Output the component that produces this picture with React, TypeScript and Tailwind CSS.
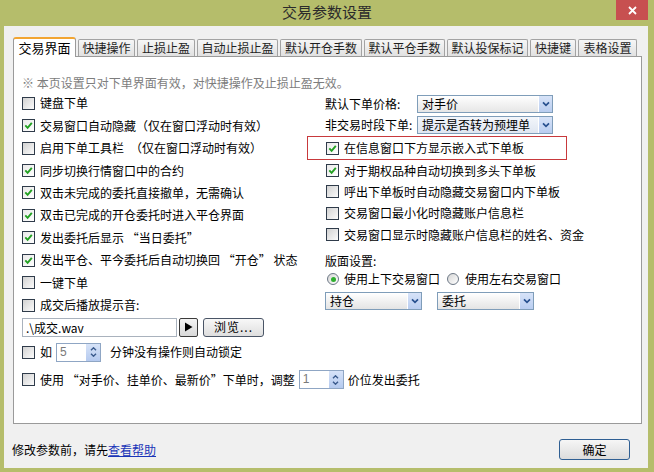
import React from "react";

function Box({ checked }: { checked?: boolean }) {
  return (
    <span
      className={
        checked
          ? "w-[13px] h-[13px] shrink-0 border border-[#2f3b4a] bg-linear-to-br from-[#e9e9e9] to-white flex items-center justify-center"
          : "w-[13px] h-[13px] shrink-0 border border-[#2f3b4a] bg-linear-to-br from-[#d2d2d2] to-[#fbfbfb]"
      }
    >
      {checked && (
        <svg width="9" height="9" viewBox="0 0 9 9">
          <path d="M1.3 4.4 L3.6 6.8 L7.8 1.8" stroke="#21a021" strokeWidth="1.9" fill="none" />
        </svg>
      )}
    </span>
  );
}

function Radio({ checked }: { checked?: boolean }) {
  return (
    <span className="w-[12px] h-[12px] shrink-0 rounded-full border border-[#6d7886] bg-linear-to-br from-[#d6d6d6] to-white flex items-center justify-center">
      {checked && <span className="w-[5px] h-[5px] rounded-full bg-[#2eae2e]" />}
    </span>
  );
}

function Chevron() {
  return (
    <svg width="8" height="6" viewBox="0 0 8 6">
      <path d="M1 1.3 L4 4.3 L7 1.3" stroke="#27508f" strokeWidth="1.7" fill="none" />
    </svg>
  );
}

function Select({ text, cls, bg }: { text: string; cls: string; bg: string }) {
  return (
    <div className={cls}>
      <div className={bg}>{text}</div>
      <div className="w-[14px] shrink-0 border-l border-white bg-linear-to-b from-[#d7e3f8] to-[#b9cdf0] flex items-center justify-center">
        <Chevron />
      </div>
    </div>
  );
}

function Spin({ value }: { value: string }) {
  return (
    <div className="w-[45px] h-[19px] shrink-0 border border-[#8fa6c4] bg-white flex">
      <div className="flex-1 pl-[3px] text-[#7a7a7a] text-[12px] leading-[17px] font-['Liberation_Sans',sans-serif]">{value}</div>
      <div className="w-[14px] bg-linear-to-b from-[#d7e3f8] to-[#b5caef] flex flex-col items-center justify-center gap-[2px]">
        <svg width="7" height="4" viewBox="0 0 7 4">
          <path d="M1 3.3 L3.5 0.8 L6 3.3" stroke="#3a5a8c" strokeWidth="1.4" fill="none" />
        </svg>
        <svg width="7" height="4" viewBox="0 0 7 4">
          <path d="M1 0.7 L3.5 3.2 L6 0.7" stroke="#3a5a8c" strokeWidth="1.4" fill="none" />
        </svg>
      </div>
    </div>
  );
}

function LRow({ checked, children }: { checked?: boolean; children: React.ReactNode }) {
  return (
    <div className="h-[22.45px] flex items-center gap-[5px]">
      <Box checked={checked} />
      <span className="whitespace-nowrap">{children}</span>
    </div>
  );
}

function RRow({ checked, children }: { checked?: boolean; children: React.ReactNode }) {
  return (
    <div className="h-[21.3px] flex items-center gap-[5px] pl-[1px]">
      <Box checked={checked} />
      <span className="whitespace-nowrap">{children}</span>
    </div>
  );
}

const tabs: { label: string; w: string }[] = [
  { label: "快捷操作", w: "w-[57px]" },
  { label: "止损止盈", w: "w-[58px]" },
  { label: "自动止损止盈", w: "w-[81px]" },
  { label: "默认开仓手数", w: "w-[82px]" },
  { label: "默认平仓手数", w: "w-[81px]" },
  { label: "默认投保标记", w: "w-[81px]" },
  { label: "快捷键", w: "w-[46px]" },
  { label: "表格设置", w: "w-[59px]" },
];

export default function App() {
  return (
    <div className="w-[654px] h-[472px] bg-[#b5bd6b] flex flex-col font-['Noto_Sans_CJK_SC','Noto_Sans',sans-serif] text-[12px] leading-[16px] text-black overflow-hidden">
      {/* title bar */}
      <div className="h-[26px] shrink-0 grid grid-cols-[1fr_auto_1fr] items-start">
        <div />
        <div className="text-[15px] leading-[20px] pt-[2px] text-[#2b2b2b]">交易参数设置</div>
        <div className="flex justify-end pr-[6px]">
          <div className="w-[32px] h-[20px] bg-[#c75050] flex items-center justify-center">
            <svg width="9" height="9" viewBox="0 0 9 9">
              <path d="M1 1 L8 8 M8 1 L1 8" stroke="white" strokeWidth="1.8" />
            </svg>
          </div>
        </div>
      </div>

      {/* client */}
      <div className="flex-1 ml-[4px] mr-[6px] mb-[4px] bg-[#f0f0f0] flex flex-col pt-[11px]">
        {/* tabs */}
        <div className="h-[19px] ml-[9px] flex items-end gap-[2px] relative z-[1]">
          <div className="w-[63px] h-[20px] -mb-px -mr-[2px] border-x border-[#9a9a9a] border-t-2 border-t-[#f2a531] rounded-t-[3px] bg-white flex items-center justify-center text-[13px]">
            交易界面
          </div>
          <div className="w-0" />
          {tabs.map((t) => (
            <div
              key={t.label}
              className={`${t.w} h-[17px] border border-b-0 border-[#a3a3a3] rounded-t-[2px] bg-linear-to-b from-[#f6f6f6] to-[#e1e1e1] flex items-center justify-center text-[#1e1e1e] whitespace-nowrap`}
            >
              {t.label}
            </div>
          ))}
        </div>

        {/* panel */}
        <div className="h-[368px] ml-[9px] mr-[6px] border border-[#9a9a9a] bg-white pl-[8px] pt-[17px] flex flex-col">
          <div className="h-[18px] text-[#7d7d7d] flex items-center">※ 本页设置只对下单界面有效，对快捷操作及止损止盈无效。</div>

          <div className="flex">
            {/* left column */}
            <div className="w-[303px] flex flex-col">
              <LRow>键盘下单</LRow>
              <LRow checked>交易窗口自动隐藏（仅在窗口浮动时有效）</LRow>
              <LRow>启用下单工具栏　（仅在窗口浮动时有效）</LRow>
              <LRow checked>同步切换行情窗口中的合约</LRow>
              <LRow checked>双击未完成的委托直接撤单，无需确认</LRow>
              <LRow checked>双击已完成的开仓委托时进入平仓界面</LRow>
              <LRow checked>发出委托后显示 “当日委托”</LRow>
              <LRow checked>发出平仓、平今委托后自动切换回 “开仓” 状态</LRow>
              <LRow>一键下单</LRow>
              <LRow>成交后播放提示音:</LRow>
              <div className="mt-[1.5px] h-[19px] flex items-center">
                <div className="w-[155px] h-[19px] border border-[#a9b2bd] bg-white pl-[3px] leading-[17px] whitespace-nowrap">.\成交.wav</div>
                <div className="ml-[2px] w-[19px] h-[19px] rounded-[2px] border border-[#3b3b3b] bg-linear-to-b from-[#f4f4f4] to-[#d9d9d9] flex items-center justify-center">
                  <svg width="9" height="10" viewBox="0 0 9 10">
                    <path d="M1 0.5 L8.5 5 L1 9.5 Z" fill="#000" />
                  </svg>
                </div>
                <div className="ml-[5px] w-[61px] h-[19px] rounded-[3px] border border-[#4a5566] bg-linear-to-b from-[#f8f8f8] to-[#dedede] flex items-center justify-center tracking-[1px]">
                  浏览...
                </div>
              </div>
            </div>

            {/* right column */}
            <div className="flex-1 flex flex-col pt-[1px]">
              <div className="h-[21px] flex items-center">
                <span className="w-[92px] whitespace-nowrap">默认下单价格:</span>
                <Select
                  text="对手价"
                  cls="w-[136px] h-[18px] border border-[#7f9db9] flex"
                  bg="flex-1 pl-[4px] leading-[16px] bg-linear-to-b from-white to-[#e6e6e6]"
                />
              </div>
              <div className="h-[21px] flex items-center">
                <span className="w-[92px] whitespace-nowrap">非交易时段下单:</span>
                <Select
                  text="提示是否转为预埋单"
                  cls="w-[136px] h-[18px] border border-[#7f9db9] flex"
                  bg="flex-1 pl-[4px] leading-[16px] bg-linear-to-b from-[#f3f6fb] to-[#dfe6f1] whitespace-nowrap"
                />
              </div>
              <div className="mt-[1px] -ml-[18px] w-[260px] h-[24px] border border-[#c8393c] flex items-center gap-[5px] pl-[18px]">
                <Box checked />
                <span className="whitespace-nowrap">在信息窗口下方显示嵌入式下单板</span>
              </div>
              <RRow checked>对于期权品种自动切换到多头下单板</RRow>
              <RRow>呼出下单板时自动隐藏交易窗口内下单板</RRow>
              <RRow>交易窗口最小化时隐藏账户信息栏</RRow>
              <RRow>交易窗口显示时隐藏账户信息栏的姓名、资金</RRow>
              <div className="mt-[7px] h-[18px] flex items-center">版面设置:</div>
              <div className="h-[18px] flex items-center pl-[2px]">
                <Radio checked />
                <span className="ml-[5px] whitespace-nowrap">使用上下交易窗口</span>
                <span className="ml-[7px]">
                  <Radio />
                </span>
                <span className="ml-[6px] whitespace-nowrap">使用左右交易窗口</span>
              </div>
              <div className="mt-[4px] h-[18px] flex items-center gap-[15px]">
                <Select
                  text="持仓"
                  cls="w-[97px] h-[18px] border border-[#7f9db9] flex"
                  bg="flex-1 pl-[4px] leading-[16px] bg-linear-to-b from-white to-[#e4e4e4]"
                />
                <Select
                  text="委托"
                  cls="w-[97px] h-[18px] border border-[#7f9db9] flex"
                  bg="flex-1 pl-[4px] leading-[16px] bg-linear-to-b from-white to-[#e4e4e4]"
                />
              </div>
            </div>
          </div>

          {/* bottom rows */}
          <div className="mt-[6px] h-[19px] flex items-center">
            <Box />
            <span className="ml-[5px]">如</span>
            <span className="ml-[4px]">
              <Spin value="5" />
            </span>
            <span className="ml-[9px] whitespace-nowrap">分钟没有操作则自动锁定</span>
          </div>
          <div className="mt-[9px] h-[18px] flex items-center">
            <Box />
            <span className="ml-[5px] whitespace-nowrap">使用 “对手价、挂单价、最新价”下单时，调整</span>
            <span className="ml-[4px]">
              <Spin value="1" />
            </span>
            <span className="ml-[4px] whitespace-nowrap">价位发出委托</span>
          </div>
        </div>

        {/* footer */}
        <div className="pt-[15px] h-[36px] flex items-center justify-between pl-[8px] pr-[18px]">
          <span className="whitespace-nowrap">
            修改参数前，请先<span className="text-[#1a35b8] underline">查看帮助</span>
          </span>
          <div className="w-[71px] h-[21px] rounded-[3px] border border-[#2f5f93] bg-linear-to-b from-[#f6f6f6] to-[#dcdcdc] flex items-center justify-center">
            确定
          </div>
        </div>
      </div>
    </div>
  );
}
